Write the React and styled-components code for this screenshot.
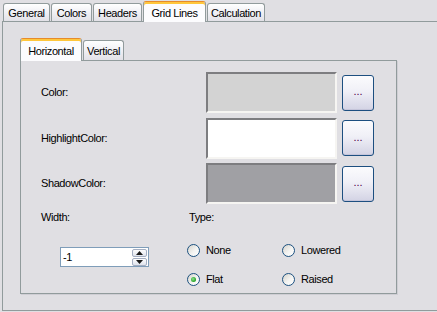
import React from "react";
import styled, { createGlobalStyle } from "styled-components";

const GlobalStyle = createGlobalStyle`
  html, body {
    margin: 0;
    padding: 0;
    background: #e0dfe3;
  }
  body {
    font-family: "Liberation Sans", Arial, sans-serif;
    font-size: 11px;
    letter-spacing: -0.4px;
    color: #000;
  }
`;

const Window = styled.div`
  width: 437px;
  height: 312px;
  overflow: hidden;
  background: #e0dfe3;
  box-sizing: border-box;
  padding-top: 1px;
`;

const TabStrip = styled.div`
  display: flex;
  align-items: flex-end;
  gap: 1px;
  height: ${(p) => p.$h}px;
  padding-left: ${(p) => p.$indent}px;
  position: relative;
  z-index: 1;
`;

const Tab = styled.div`
  box-sizing: border-box;
  width: ${(p) => p.$w}px;
  height: ${(p) => (p.$active ? p.$h + 1 : p.$h - 2)}px;
  margin-bottom: ${(p) => (p.$active ? -1 : 0)}px;
  display: flex;
  align-items: center;
  justify-content: center;
  border: 1px solid #919b9c;
  border-bottom: none;
  border-radius: 3px 3px 0 0;
  white-space: nowrap;
  background: ${(p) =>
    p.$active ? "#fcfcfe" : "linear-gradient(#ffffff, #f3f3f7 40%, #e2e1e7)"};
  ${(p) =>
    p.$active &&
    `
    border-top: 1px solid #e68b2c;
    box-shadow: inset 0 2px 0 #ffc73c;
    padding-top: 2px;
  `}
  ${(p) => !p.$active && `padding-top: 1px;`}
`;

const Panel = styled.div`
  box-sizing: border-box;
  border: 1px solid #919b9c;
  background: #e0dfe3;
  width: ${(p) => p.$w}px;
  height: ${(p) => p.$h}px;
  margin-left: ${(p) => p.$left}px;
  padding: ${(p) => p.$pad};
`;

const InnerPanel = styled(Panel)`
  box-shadow: 1px 1px 0 #cfced4;
`;

const ColorGrid = styled.div`
  display: grid;
  grid-template-columns: 160px 131px 32px;
  grid-auto-rows: 41px;
  column-gap: 5px;
  row-gap: 4.5px;
  align-items: center;
`;

const Label = styled.div`
  line-height: 13px;
  padding-left: ${(p) => p.$indent || 0}px;
`;

const Swatch = styled.div`
  box-sizing: border-box;
  height: 41px;
  background: ${(p) => p.$color};
  border-top: 2px solid #7d7d80;
  border-left: 2px solid #7d7d80;
  border-right: 2px solid #f6f5f2;
  border-bottom: 2px solid #f6f5f2;
`;

const DotsButton = styled.button`
  box-sizing: border-box;
  width: 32px;
  height: 36px;
  padding: 0 0 2px;
  border: 1px solid #1d4f80;
  border-radius: 3px;
  background: linear-gradient(#fbfbfd, #f0f0f7 45%, #d3d3e4);
  box-shadow: inset 0 -1px 0 #c5c5da;
  font: inherit;
  letter-spacing: 0;
  color: #4b0045;
  line-height: 1;
`;

const BottomGrid = styled.div`
  display: grid;
  grid-template-columns: 146px 1fr;
  margin-top: 7px;
`;

const Column = styled.div`
  display: flex;
  flex-direction: column;
`;

const Spin = styled.div`
  box-sizing: border-box;
  display: flex;
  align-items: center;
  justify-content: space-between;
  width: 89px;
  height: 20px;
  margin: 23px 0 0 19px;
  padding: 1px 1px 1px 2px;
  border: 1px solid #7f9db9;
  background: #fff;
`;

const SpinValue = styled.span`
  line-height: 16px;
`;

const SpinButtons = styled.div`
  display: flex;
  flex-direction: column;
  gap: 1px;
`;

const SpinButton = styled.div`
  box-sizing: border-box;
  width: 15px;
  height: 8px;
  display: flex;
  align-items: center;
  justify-content: center;
  border: 1px solid #a4aec2;
  border-radius: 2px;
  background: linear-gradient(#fdfdfe, #dfe3ec);
`;

const RadioGrid = styled.div`
  display: grid;
  grid-template-columns: 95px 95px;
  grid-auto-rows: 16px;
  row-gap: 13px;
  margin-top: 18px;
`;

const RadioOption = styled.label`
  display: flex;
  align-items: center;
  gap: 6px;
  line-height: 13px;
`;

const RadioCircle = styled.span`
  box-sizing: border-box;
  width: 13px;
  height: 13px;
  flex: none;
  border-radius: 50%;
  border: 1px solid #1c5180;
  background: linear-gradient(135deg, #d5d2cb, #f4f4f2 55%, #ffffff);
  display: flex;
  align-items: center;
  justify-content: center;
  &::after {
    content: "";
    display: ${(p) => (p.$checked ? "block" : "none")};
    width: 5px;
    height: 5px;
    border-radius: 50%;
    background: radial-gradient(circle at 40% 40%, #8fe08f, #21a121 70%);
  }
`;

const Arrow = ({ up }) => (
  <svg width="7" height="4" viewBox="0 0 7 4">
    <path d={up ? "M0 4 L3.5 0 L7 4 Z" : "M0 0 L3.5 4 L7 0 Z"} fill="#1a1a1a" />
  </svg>
);

const outerTabs = [
  { name: "General", w: 47 },
  { name: "Colors", w: 41 },
  { name: "Headers", w: 49 },
  { name: "Grid Lines", w: 63, active: true },
  { name: "Calculation", w: 58 },
];

const innerTabs = [
  { name: "Horizontal", w: 62, active: true },
  { name: "Vertical", w: 41 },
];

const colorRows = [
  { label: "Color:", color: "#d3d3d3" },
  { label: "HighlightColor:", color: "#ffffff" },
  { label: "ShadowColor:", color: "#a0a0a4" },
];

const radios = [
  { label: "None" },
  { label: "Lowered" },
  { label: "Flat", checked: true },
  { label: "Raised" },
];

export default function App() {
  return (
    <Window>
      <GlobalStyle />
      <TabStrip $h={20} $indent={3}>
        {outerTabs.map((t) => (
          <Tab key={t.name} $w={t.w} $h={20} $active={t.active}>
            {t.name}
          </Tab>
        ))}
      </TabStrip>
      <Panel $w={440} $h={290} $left={2} $pad="16px 0 0 17px">
        <TabStrip $h={22} $indent={0}>
          {innerTabs.map((t) => (
            <Tab key={t.name} $w={t.w} $h={22} $active={t.active}>
              {t.name}
            </Tab>
          ))}
        </TabStrip>
        <InnerPanel $w={377} $h={234} $left={0} $pad="11px 0 0 20px">
          <ColorGrid>
            {colorRows.map((r) => (
              <React.Fragment key={r.label}>
                <Label>{r.label}</Label>
                <Swatch $color={r.color} />
                <DotsButton>...</DotsButton>
              </React.Fragment>
            ))}
          </ColorGrid>
          <BottomGrid>
            <Column>
              <Label>Width:</Label>
              <Spin>
                <SpinValue>-1</SpinValue>
                <SpinButtons>
                  <SpinButton>
                    <Arrow up />
                  </SpinButton>
                  <SpinButton>
                    <Arrow />
                  </SpinButton>
                </SpinButtons>
              </Spin>
            </Column>
            <Column>
              <Label $indent={2}>Type:</Label>
              <RadioGrid>
                {radios.map((r) => (
                  <RadioOption key={r.label}>
                    <RadioCircle $checked={r.checked} />
                    {r.label}
                  </RadioOption>
                ))}
              </RadioGrid>
            </Column>
          </BottomGrid>
        </InnerPanel>
      </Panel>
    </Window>
  );
}
